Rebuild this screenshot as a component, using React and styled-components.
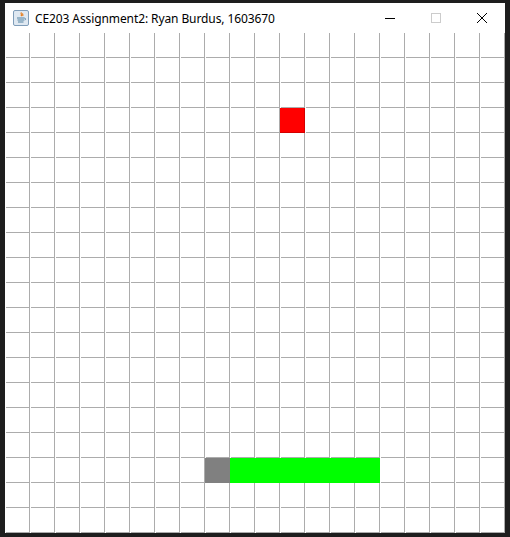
import React from 'react';
import styled, { createGlobalStyle } from 'styled-components';

const GlobalStyle = createGlobalStyle`
  html, body {
    margin: 0;
    padding: 0;
    background: #1e1e1e;
    overflow: hidden;
  }
`;

const Page = styled.div`
  width: 510px;
  height: 537px;
  padding: 3px 0 0 5px;
  box-sizing: border-box;
`;

const Frame = styled.div`
  width: 500px;
  background: #ffffff;
  display: flex;
  flex-direction: column;
`;

const TitleBar = styled.div`
  height: 30px;
  display: flex;
  align-items: center;
  font-family: "Noto Sans", "Liberation Sans", sans-serif;
  font-size: 12px;
  color: #000;
`;

const AppIcon = styled.svg`
  width: 16px;
  height: 16px;
  margin-left: 8px;
  margin-right: 6px;
  flex: none;
`;

const Title = styled.span`
  flex: 1;
  white-space: nowrap;
  letter-spacing: -0.1px;
`;

const Controls = styled.div`
  display: flex;
  height: 100%;
`;

const CtrlButton = styled.div`
  width: 46px;
  height: 30px;
  display: flex;
  align-items: center;
  justify-content: center;
`;

const Board = styled.div`
  display: grid;
  grid-template-columns: repeat(20, 25px);
  grid-auto-rows: 25px;
`;

const Cell = styled.div`
  box-sizing: border-box;
  border-right: 1px solid ${p => p.$edge || '#acacac'};
  background-color: ${p => p.$fill || '#ffffff'};
  background-image: linear-gradient(${p => p.$edge || '#acacac'}, ${p => p.$edge || '#acacac'});
  background-repeat: no-repeat;
  background-position: ${p => (p.$fill ? '0 24px' : '1px 24px')};
  background-size: ${p => (p.$fill ? '24px 1px' : '23px 1px')};
`;

const food = { x: 11, y: 3 };
const snake = [
  { x: 8, y: 17 },
  { x: 9, y: 17 },
  { x: 10, y: 17 },
  { x: 11, y: 17 },
  { x: 12, y: 17 },
  { x: 13, y: 17 },
  { x: 14, y: 17 },
];

function cellStyle(x, y) {
  if (food.x === x && food.y === y) return { fill: '#ff0000', edge: '#d40000' };
  const i = snake.findIndex(s => s.x === x && s.y === y);
  if (i === 0) return { fill: '#808080', edge: '#808080' };
  if (i > 0) return { fill: '#00ff00', edge: '#00ff00' };
  return {};
}

const JavaIcon = () => (
  <AppIcon viewBox="0 0 16 16">
    <rect x="0.5" y="0.5" width="15" height="15" rx="1.5" fill="#dfe8f1" stroke="#7f9db9" />
    <path d="M8.5 2.5c-1.5 1.2 1 2-0.5 3.6M10 3.5c-1 .8.6 1.4-.4 2.5" stroke="#e76f00" strokeWidth="1.1" fill="none" />
    <path d="M4 8h7.5M4.5 10h6.5M5 12h5.5" stroke="#5382a1" strokeWidth="1" />
    <path d="M11.5 8.2c1.5 0 1.5 1.8 0 1.8" stroke="#5382a1" strokeWidth="0.9" fill="none" />
  </AppIcon>
);

export default function App() {
  const cells = [];
  for (let y = 0; y < 20; y++) {
    for (let x = 0; x < 20; x++) {
      const s = cellStyle(x, y);
      cells.push(<Cell key={`${x}-${y}`} $fill={s.fill} $edge={s.edge} />);
    }
  }
  return (
    <>
      <GlobalStyle />
      <Page>
        <Frame>
          <TitleBar>
            <JavaIcon />
            <Title>CE203 Assignment2: Ryan Burdus, 1603670</Title>
            <Controls>
              <CtrlButton>
                <svg width="10" height="10" viewBox="0 0 10 10">
                  <path d="M0 5.5h10" stroke="#000" strokeWidth="1" />
                </svg>
              </CtrlButton>
              <CtrlButton>
                <svg width="10" height="10" viewBox="0 0 10 10">
                  <rect x="0.5" y="0.5" width="9" height="9" fill="none" stroke="#cccccc" strokeWidth="1" />
                </svg>
              </CtrlButton>
              <CtrlButton>
                <svg width="10" height="10" viewBox="0 0 10 10">
                  <path d="M0 0L10 10M10 0L0 10" stroke="#000" strokeWidth="1" />
                </svg>
              </CtrlButton>
            </Controls>
          </TitleBar>
          <Board>{cells}</Board>
        </Frame>
      </Page>
    </>
  );
}
